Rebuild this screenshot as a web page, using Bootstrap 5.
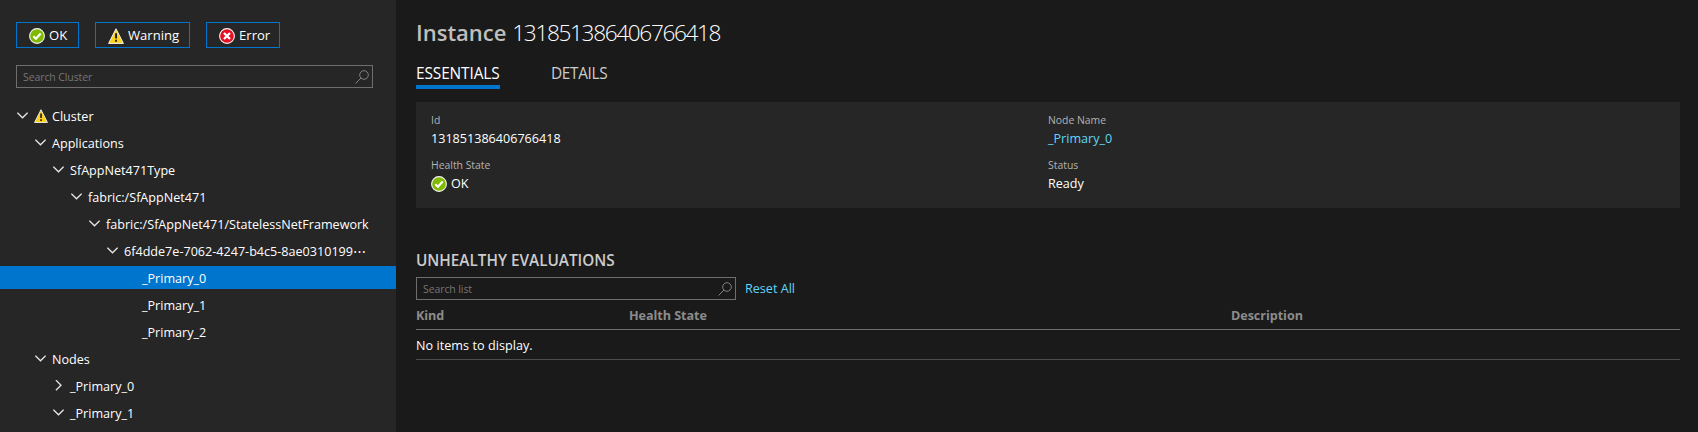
<!DOCTYPE html>
<html lang="en" data-bs-theme="dark">
<head>
<meta charset="utf-8">
<meta name="viewport" content="width=device-width, initial-scale=1">
<title>Service Fabric Explorer</title>
<link href="https://cdn.jsdelivr.net/npm/bootstrap@5.3.0/dist/css/bootstrap.min.css" rel="stylesheet">
<style>
  body { font-family: "Open Sans", sans-serif; font-size: 12.6px; line-height: 19px; color: #fff; background: #1a1a1a; }
  .side { width: 396px; background: #262626; padding-top: 22px; }
  .filter { height: 26px; border: 1px solid #0075cd; border-radius: 0; background: transparent; color: #fff; font-size: 13.1px; line-height: 19px; padding: 3px 0 0 12px; gap: 4px; }
  .filter svg { margin-top: 2px; }
  .filter-ok { width: 63px; } .filter-warn { width: 95px; } .filter-err { width: 74px; }
  .searchbox { height: 23px; border: 1px solid #6e6e6e; padding: 0 3px 0 6px; }
  .side .searchbox { margin: 17px 23px 16px 16px; }
  .list-search { width: 320px; }
  .searchbox input { font-size: 10.5px; line-height: 16px; color: #fff; letter-spacing: -.1px; outline: 0; }
  .searchbox input::placeholder { color: #757575; opacity: 1; }
  .tree li { height: 23px; margin-bottom: 4px; padding-left: calc(17px + var(--lvl) * 18px); white-space: nowrap; }
  .tree span { padding-top: 2px; }
  .tree .chev { width: 11px; height: 11px; margin-right: 6px; flex: none; }
  .tree .on { background: #0075cd; }
  .l1 { --lvl: 1; } .l2 { --lvl: 2; } .l3 { --lvl: 3; } .l4 { --lvl: 4; } .l5 { --lvl: 5; } .l6 { --lvl: 6; } .l0 { --lvl: 0; }
  .page { padding: 15px 18px 0 20px; }
  .title { font-size: 22.6px; line-height: 34px; height: 34px; font-weight: 300; }
  .title b { font-size: 22px; font-weight: 600; color: #bfbfbf; }
  .title span { letter-spacing: -1.35px; }
  .tabs { margin-top: 12px; gap: 50px; font-size: 15.4px; line-height: 25px; }
  .tabs a { color: #ccc; text-decoration: none; height: 28px; letter-spacing: -.1px; }
  .tabs .on { color: #fff; border-bottom: 4px solid #0075cd; width: 84px; }
  .tabs a + a { letter-spacing: -.35px; margin-left: 1px; }
  .panel { margin-top: 13px; height: 106px; background: #262626; padding: 10px 15px; }
  .panel dl > div { width: 617px; height: 45px; }
  .panel dt { font-size: 10.4px; line-height: 16px; font-weight: 400; color: #b3b3b3; }
  .panel dd { line-height: 22px; margin: 0; gap: 4px; }
  .panel dd svg { margin-top: -1px; }
  .cyan { color: #5fd6f7; text-decoration: none; }
  h2.sec { margin: 41px 0 5px; font-size: 15.3px; line-height: 23px; font-weight: 600; color: #ccc; }
  .reset { margin-left: 9px; }
  .list th { color: #8c8c8c; font-weight: 700; padding: 8px 0 6px; border-bottom: 1px solid #6e6e6e; line-height: 15px; letter-spacing: -.05px; }
  .list td { color: #fff; padding: 7px 0 5px; border-bottom: 1px solid #4d4d4d; line-height: 17px; letter-spacing: .05px; }
</style>
</head>
<body>
<svg class="d-none">
  <symbol id="ok" viewBox="0 0 16 16"><circle cx="8" cy="8" r="7.4" fill="#7fba00" stroke="#f2f2f2" stroke-width="1.1"/><path d="M4.3 8.3 6.9 10.8 11.7 5.5" fill="none" stroke="#fff" stroke-width="2.1"/></symbol>
  <symbol id="err" viewBox="0 0 16 16"><circle cx="8" cy="8" r="7.4" fill="#e81123" stroke="#f2f2f2" stroke-width="1.1"/><path d="M5 5l6 6M11 5l-6 6" stroke="#fff" stroke-width="2.3"/></symbol>
  <symbol id="warn" viewBox="0 0 16 16"><path d="M8 .8 15.4 15.4H.6Z" fill="#fcd116" stroke="#f2f2f2" stroke-width="1"/><path d="M7.1 5.2h1.9v5.2H7.1zM7.1 11.8h1.9v1.9H7.1z" fill="#1e1e1e"/></symbol>
  <symbol id="down" viewBox="0 0 11 11"><path d="M.4 2.7 5.5 7.8 10.6 2.7" fill="none" stroke="#e6e6e6" stroke-width="1.3"/></symbol>
  <symbol id="right" viewBox="0 0 11 11"><path d="M2.9 .1 8 5.2 2.9 10.3" fill="none" stroke="#e6e6e6" stroke-width="1.3"/></symbol>
  <symbol id="find" viewBox="0 0 14 14"><circle cx="9" cy="5" r="4.3" fill="none" stroke="#808080"/><path d="M6 8 .5 13.5" stroke="#808080"/></symbol>
</svg>
<div class="d-flex vh-100 overflow-hidden">
  <aside class="side flex-shrink-0">
    <div class="d-flex gap-3 px-3">
      <button class="filter filter-ok d-flex"><svg width="16" height="16"><use href="#ok"/></svg><span>OK</span></button>
      <button class="filter filter-warn d-flex"><svg width="16" height="16"><use href="#warn"/></svg><span>Warning</span></button>
      <button class="filter filter-err d-flex"><svg width="16" height="16"><use href="#err"/></svg><span>Error</span></button>
    </div>
    <div class="searchbox d-flex align-items-center">
      <input class="flex-grow-1 bg-transparent border-0 p-0" placeholder="Search Cluster"><svg width="14" height="14"><use href="#find"/></svg>
    </div>
    <ul class="tree list-unstyled m-0">
      <li class="l0 d-flex align-items-center"><svg class="chev"><use href="#down"/></svg><svg width="14" height="14" class="me-1"><use href="#warn"/></svg><span>Cluster</span></li>
      <li class="l1 d-flex align-items-center"><svg class="chev"><use href="#down"/></svg><span>Applications</span></li>
      <li class="l2 d-flex align-items-center"><svg class="chev"><use href="#down"/></svg><span>SfAppNet471Type</span></li>
      <li class="l3 d-flex align-items-center"><svg class="chev"><use href="#down"/></svg><span>fabric:/SfAppNet471</span></li>
      <li class="l4 d-flex align-items-center"><svg class="chev"><use href="#down"/></svg><span>fabric:/SfAppNet471/StatelessNetFramework</span></li>
      <li class="l5 d-flex align-items-center"><svg class="chev"><use href="#down"/></svg><span>6f4dde7e-7062-4247-b4c5-8ae0310199⋯</span></li>
      <li class="l6 on d-flex align-items-center"><svg class="chev"></svg><span>_Primary_0</span></li>
      <li class="l6 d-flex align-items-center"><svg class="chev"></svg><span>_Primary_1</span></li>
      <li class="l6 d-flex align-items-center"><svg class="chev"></svg><span>_Primary_2</span></li>
      <li class="l1 d-flex align-items-center"><svg class="chev"><use href="#down"/></svg><span>Nodes</span></li>
      <li class="l2 d-flex align-items-center"><svg class="chev"><use href="#right"/></svg><span>_Primary_0</span></li>
      <li class="l2 d-flex align-items-center"><svg class="chev"><use href="#down"/></svg><span>_Primary_1</span></li>
    </ul>
  </aside>
  <main class="page flex-grow-1">
    <h1 class="title m-0"><b>Instance</b> <span>131851386406766418</span></h1>
    <nav class="tabs d-flex"><a class="on" href="#">ESSENTIALS</a><a href="#">DETAILS</a></nav>
    <section class="panel">
      <dl class="d-flex flex-wrap m-0">
        <div><dt>Id</dt><dd>131851386406766418</dd></div>
        <div><dt>Node Name</dt><dd><a class="cyan" href="#">_Primary_0</a></dd></div>
        <div><dt>Health State</dt><dd class="d-flex align-items-center"><svg width="16" height="16"><use href="#ok"/></svg><span>OK</span></dd></div>
        <div><dt>Status</dt><dd>Ready</dd></div>
      </dl>
    </section>
    <h2 class="sec">UNHEALTHY EVALUATIONS</h2>
    <div class="d-flex align-items-center">
      <div class="searchbox list-search d-flex align-items-center"><input class="flex-grow-1 bg-transparent border-0 p-0" placeholder="Search list"><svg width="14" height="14"><use href="#find"/></svg></div>
      <a class="cyan reset" href="#">Reset All</a>
    </div>
    <table class="list w-100">
      <colgroup><col style="width:213px"><col style="width:602px"><col></colgroup>
      <thead><tr><th>Kind</th><th>Health State</th><th>Description</th></tr></thead>
      <tbody><tr><td colspan="3">No items to display.</td></tr></tbody>
    </table>
  </main>
</div>
<script src="https://cdn.jsdelivr.net/npm/bootstrap@5.3.0/dist/js/bootstrap.bundle.min.js"></script>
</body>
</html>
